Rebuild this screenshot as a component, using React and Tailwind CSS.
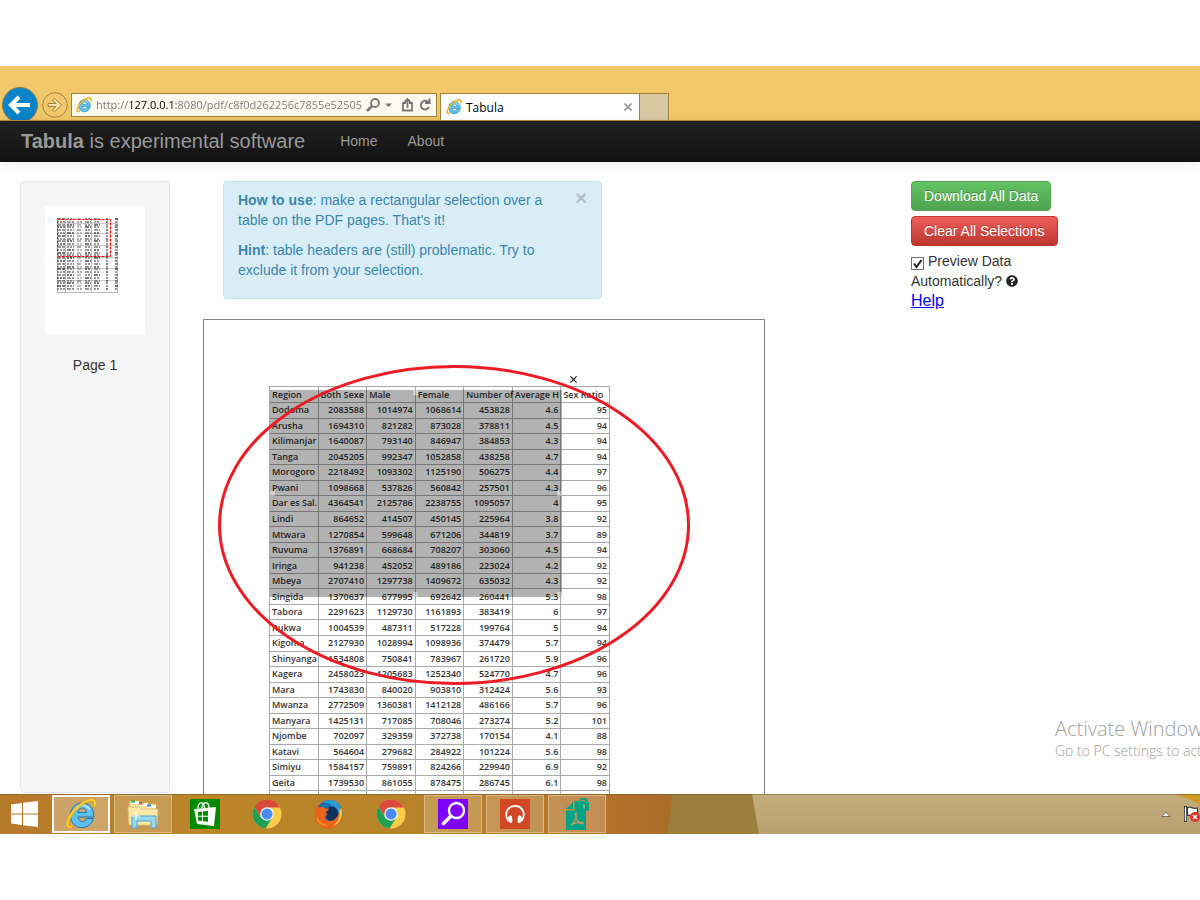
import { FaQuestionCircle } from 'react-icons/fa';

const columns = ['Region', 'Both Sexe', 'Male', 'Female', 'Number of', 'Average H', 'Sex Ratio'];

const rows = [
  ['Dodoma', '2083588', '1014974', '1068614', '453828', '4.6', '95'],
  ['Arusha', '1694310', '821282', '873028', '378811', '4.5', '94'],
  ['Kilimanjar', '1640087', '793140', '846947', '384853', '4.3', '94'],
  ['Tanga', '2045205', '992347', '1052858', '438258', '4.7', '94'],
  ['Morogoro', '2218492', '1093302', '1125190', '506275', '4.4', '97'],
  ['Pwani', '1098668', '537826', '560842', '257501', '4.3', '96'],
  ['Dar es Sal.', '4364541', '2125786', '2238755', '1095057', '4', '95'],
  ['Lindi', '864652', '414507', '450145', '225964', '3.8', '92'],
  ['Mtwara', '1270854', '599648', '671206', '344819', '3.7', '89'],
  ['Ruvuma', '1376891', '668684', '708207', '303060', '4.5', '94'],
  ['Iringa', '941238', '452052', '489186', '223024', '4.2', '92'],
  ['Mbeya', '2707410', '1297738', '1409672', '635032', '4.3', '92'],
  ['Singida', '1370637', '677995', '692642', '260441', '5.3', '98'],
  ['Tabora', '2291623', '1129730', '1161893', '383419', '6', '97'],
  ['Rukwa', '1004539', '487311', '517228', '199764', '5', '94'],
  ['Kigoma', '2127930', '1028994', '1098936', '374479', '5.7', '94'],
  ['Shinyanga', '1534808', '750841', '783967', '261720', '5.9', '96'],
  ['Kagera', '2458023', '1205683', '1252340', '524770', '4.7', '96'],
  ['Mara', '1743830', '840020', '903810', '312424', '5.6', '93'],
  ['Mwanza', '2772509', '1360381', '1412128', '486166', '5.7', '96'],
  ['Manyara', '1425131', '717085', '708046', '273274', '5.2', '101'],
  ['Njombe', '702097', '329359', '372738', '170154', '4.1', '88'],
  ['Katavi', '564604', '279682', '284922', '101224', '5.6', '98'],
  ['Simiyu', '1584157', '759891', '824266', '229940', '6.9', '92'],
  ['Geita', '1739530', '861055', '878475', '286745', '6.1', '98'],
  ['Tanzania', '43625354', '21239313', '22386041', '9109150', '4.8', '95'],
];

function IeIcon({ className }) {
  return (
    <svg viewBox="0 0 32 32" className={className} aria-hidden="true">
      <path
        d="M28.500 20.500C26.800 26 22.500 29.500 17 29.500 10 29.500 5.500 24.500 5.500 17.300 5.500 10.500 10.300 5 17 5c7.500 0 12 5.500 11.800 14H13c.4 2.800 2.100 4.700 4.600 4.700 1.700 0 2.900-1 3.700-3.200zM13 14.500h8.500c-.3-2.900-1.900-4.400-4.200-4.400s-3.900 1.500-4.300 4.400z"
        fill="#5cc0f0"
        stroke="#1d78b8"
        strokeWidth="1"
      />
      <path d="M9 14c1-4 4-6.500 8-6.500 3.500 0 6.500 1.500 8 4.500" fill="none" stroke="#b4e7fb" strokeWidth="2" />
      <path
        d="M6.500 28.500C2 30.500 1 26 4.500 19.500 9 11 18 3.500 25.500 2c4-.8 5.500 1.700 4 5.500"
        fill="none"
        stroke="#d99a10"
        strokeWidth="3"
        strokeLinecap="round"
      />
      <path
        d="M6.500 28.500C2 30.500 1 26 4.500 19.500 9 11 18 3.500 25.500 2c4-.8 5.500 1.700 4 5.500"
        fill="none"
        stroke="#fbd02f"
        strokeWidth="2"
        strokeLinecap="round"
      />
    </svg>
  );
}

function ChromeIcon() {
  return (
    <svg viewBox="0 0 30 30" className="size-[30px]" aria-hidden="true">
      <circle cx="15" cy="15" r="14.500" fill="#fccd48" />
      <path d="M2.400 7.700A14.500 14.500 0 0 0 13.500 29.400L20.500 18.500 9 18z" fill="#1fa055" />
      <path d="M2.400 7.700A14.500 14.500 0 0 1 28 8.500H15l-6.300 8.500z" fill="#dc4a3d" />
      <circle cx="15" cy="15" r="6.800" fill="#f4f4f4" />
      <circle cx="15" cy="15" r="5.500" fill="#4a8af4" />
    </svg>
  );
}

function FirefoxIcon() {
  return (
    <svg viewBox="0 0 30 30" className="size-[30px]" aria-hidden="true">
      <circle cx="15.500" cy="14" r="13" fill="#1b6fb0" />
      <path d="M9 4c4-4 12-4 16 1 2 3 3 7 2 11l-6-5-6-7z" fill="#2c9bd6" />
      <path d="M14 9c4-3 9-1 10 4s-2 9-7 9-7-6-3-13z" fill="#10305e" />
      <path
        d="M27.500 9c3 9-2 20-12.500 20.500C6 29.500.5 23 .6 15.500.7 11 2 8 4 5.500c0 1.500.4 2.500 1 3C7 7.300 9.500 8 11 9.500l4 .2c-.3 1.500-1.500 2.400-3 2.800-.3 1.300.4 2.300 1.800 2.700-2.600 1.400-3.600 3-2.300 4.800 2 2.700 6 2.500 8.500.8 3.500-2.300 5.700-6 5.300-11z"
        fill="#e8641b"
      />
      <path d="M27.500 9c2 8-1.500 16-9 18.500 5-4 7.500-8 7-16z" fill="#fbc63c" />
      <path d="M3 16c1 6 6 10 12 10-4 2-10 0-12-5z" fill="#f58b28" />
    </svg>
  );
}

function FolderIcon() {
  return (
    <svg viewBox="0 0 32 30" className="h-[30px] w-8" aria-hidden="true">
      <path d="M2 4V2h9l1 2h7l1 1h9v20H2z" fill="#f1dc90" stroke="#cda94c" strokeWidth=".8" />
      <path d="M4 2h8v3H4zM12 4h9v3h-9zM20 6h9v3h-9z" fill="#fff" />
      <path d="M4 1.500h4v2H4z" fill="#22b14c" />
      <path d="M12 3.500h3.500v2H12z" fill="#d9432f" />
      <path d="M20 5.500h4v2h-4z" fill="#2b7fd4" />
      <path d="M1 8h11l2 2h17l-1 16H2z" fill="#f8e8a6" stroke="#dcc273" strokeWidth=".8" />
      <path d="M5 17h24v12h-5v-7H10v7H5z" fill="#9bd6ef" stroke="#4ea5cf" />
      <path d="M9 13v8M5 17h8" stroke="#fff" strokeWidth="1" />
    </svg>
  );
}

function StoreIcon() {
  return (
    <svg viewBox="0 0 30 30" className="size-[30px]" aria-hidden="true">
      <path d="M0 0h30v30H0z" fill="#008a00" />
      <path d="M8 9.500C8 2 14 2 14.500 9M12 9c0-7 7-7 7 0" fill="none" stroke="#fff" strokeWidth="1.300" />
      <path d="M4 10l22-2-2 19-17-2z" fill="#fff" />
      <path d="m8 13 4-.5v4.300H8zm5-.6 5-.6v5h-5zM8 17.800h4V22l-4-.5zm5 0h5v5l-5-.6z" fill="#008a00" />
    </svg>
  );
}

function SearchAppIcon() {
  return (
    <svg viewBox="0 0 30 30" className="size-[30px]" aria-hidden="true">
      <path d="M0 0h30v30H0z" fill="#8000ff" />
      <circle cx="18.500" cy="11.500" r="7.500" fill="none" stroke="#fff" strokeWidth="2.400" />
      <path d="m12.500 17.500-7 7" stroke="#fff" strokeWidth="3.600" strokeLinecap="round" />
    </svg>
  );
}

function HeadphonesIcon() {
  return (
    <svg viewBox="0 0 30 30" className="size-[30px]" aria-hidden="true">
      <path d="M0 0h30v30H0z" fill="#d24726" />
      <path d="M8.500 22C3.500 15 7.500 7 15 7s11.500 8 6.500 15" fill="none" stroke="#fff" strokeWidth="1.800" />
      <path
        d="M10 16.500c2-.5 2 .5 2.300 4 .2 2.500 0 3.500-1.300 3.500-2 0-3-2-3-4s.6-3 2-3.500zM20 16.500c-2-.5-2 .5-2.300 4-.2 2.500 0 3.500 1.300 3.500 2 0 3-2 3-4s-.6-3-2-3.500z"
        fill="#fff"
      />
    </svg>
  );
}

function PdfLockIcon() {
  return (
    <svg viewBox="0 0 26 32" className="h-8 w-[26px]" aria-hidden="true">
      <path d="M2 11 9 4v7zM10.500 3H22v29H2V12.500h8.500z" fill="#00a384" />
      <path d="M15 4h10v8.500H15z" fill="#00a384" />
      <path d="M16 4C16-.5 23-.5 23 4" fill="none" stroke="#00a384" strokeWidth="1.700" />
      <path d="M20 6.500v4" stroke="#d8b27c" strokeWidth="1.500" />
      <path
        d="M7 27c2-1 6-7 5.500-12-2-1-1 5 1 8s5.500 3.500 5.500 2-8-1-12 2z"
        fill="none"
        stroke="#b99b63"
        strokeWidth="1.400"
      />
    </svg>
  );
}

const taskbarApps = [
  { name: 'Internet Explorer', icon: <IeIcon className="size-8" />, style: 'border-2 border-white/90 bg-white/30' },
  { name: 'File Explorer', icon: <FolderIcon />, style: 'border border-[#d9b888] bg-white/20' },
  { name: 'Store', icon: <StoreIcon />, style: '' },
  { name: 'Google Chrome', icon: <ChromeIcon />, style: '' },
  { name: 'Firefox', icon: <FirefoxIcon />, style: '' },
  { name: 'Chrome Profile', icon: <ChromeIcon />, style: '' },
  { name: 'Search', icon: <SearchAppIcon />, style: 'border border-[#d9b888] bg-white/20' },
  { name: 'Music', icon: <HeadphonesIcon />, style: 'border border-[#d9b888] bg-white/20' },
  { name: 'PDF Unlocker', icon: <PdfLockIcon />, style: 'border border-[#d9b888] bg-white/20' },
];

function BrowserBar() {
  return (
    <div className="h-[55px] shrink-0 overflow-hidden border-b border-[#b98f3c] bg-[#f0c869] pt-5 font-['Open_Sans',sans-serif] text-black">
      <div className="flex h-[38px] items-center pl-0.5">
        <button aria-label="Back" className="size-9 shrink-0">
          <svg viewBox="0 0 36 36" className="size-9">
            <circle cx="18" cy="18" r="17.500" fill="#0a83c8" stroke="#8c7a4c" />
            <path d="M28 18H10M17 10l-8 8 8 8" fill="none" stroke="#fff" strokeWidth="4" />
          </svg>
        </button>
        <button aria-label="Forward" className="ml-1 size-[26px] shrink-0">
          <svg viewBox="0 0 26 26" className="size-[26px]">
            <circle cx="13" cy="13" r="12.300" fill="none" stroke="#a3823f" />
            <path
              d="M6 11.500h8L10.500 8l2-1.500L19.500 13l-7 6.500-2-1.500 3.500-3.500H6z"
              fill="#f8e3ac"
              stroke="#a3823f"
            />
          </svg>
        </button>
        <div className="ml-[3px] flex h-6 w-[366px] shrink-0 items-center border border-[#a3823f] bg-[#fffaee] px-1">
          <IeIcon className="size-4 shrink-0" />
          {/* the host part of the address is darker than the rest */}
          <input
            aria-label="Address"
            readOnly
            value="http://127.0.0.1:8080/pdf/c8f0d262256c7855e52505"
            className="ml-1 min-w-0 flex-1 bg-[linear-gradient(to_right,#777_35px,#000_35px,#000_80px,#777_80px)] bg-clip-text text-[11px] text-transparent outline-none"
          />
          <svg viewBox="0 0 66 16" className="ml-0.5 h-4 w-[66px] shrink-0" fill="none" stroke="#777">
            <circle cx="9" cy="6" r="4" strokeWidth="1.800" />
            <path d="m6 9-5 5" strokeWidth="2.600" />
            <path d="M19 6.500h7L22.500 10z" fill="#777" stroke="none" />
            <path d="M40 6h-3v7.500h9V6h-3M41.500 11V2.500M38.500 5l3-3 3 3" strokeWidth="1.800" />
            <path d="M62.500 5.500A4.300 4.300 0 1 0 63 10M63.500 1.500V6H59" strokeWidth="2" />
          </svg>
        </div>
        <div className="mt-[7px] ml-[3px] flex self-start">
          <div className="flex h-[31px] w-[200px] items-start border border-[#a3823f] bg-white pt-[5px] pr-[3px] pl-[5px]">
            <IeIcon className="size-4" />
            <span className="ml-1 flex-1 pt-px text-[12px] leading-4">Tabula</span>
            <button aria-label="Close tab" className="flex size-4 items-center justify-center">
              <svg viewBox="0 0 8 8" className="size-2">
                <path d="m.5.5 7 7m0-7-7 7" stroke="#9a9a9a" strokeWidth="1.800" />
              </svg>
            </button>
          </div>
          <button aria-label="New tab" className="h-[31px] w-[29px] border border-l-0 border-[#a3823f] bg-[#d8c8a2]" />
        </div>
      </div>
    </div>
  );
}

function Thumbnail() {
  const cols = [[12, 8], [22, 7], [32, 5], [40, 6], [49, 6], [61, 2], [70, 3]];
  return (
    <svg viewBox="0 0 100 129" className="mx-auto h-[129px] w-[100px] bg-white" aria-label="Page 1 preview">
      {[18, 28, 40, 52, 63, 75].map((y) => (
        <path key={y} d={`M12 ${y - 0.5}h61`} stroke="#c8c8c8" />
      ))}
      <path d="M12.500 12v75M20.500 12v75M46.500 12v75M72.500 12v75M12 86.500h61" stroke="#bbb" />
      {rows.map((row, i) =>
        cols.map(([x, w], j) => (
          <path
            key={`${i}-${j}`}
            d={`M${x} ${13 + Math.round(i * 2.8)}h${w}`}
            stroke={(i + j) % 3 ? '#555' : '#222'}
            strokeWidth="1.600"
            strokeDasharray={(i + j) % 2 ? '2 1' : '4 1'}
            opacity={j === 2 ? 0.5 : 0.8}
          />
        ))
      )}
      <path d="M12.500 13.500h53v37h-53z" fill="none" stroke="#fff" />
      <path d="M12.500 13.500h53v37h-53z" fill="none" stroke="#f00" strokeDasharray="3 1" />
    </svg>
  );
}

function PdfPage() {
  return (
    <div className="relative h-[727px] w-[562px] border border-[#888] bg-white pt-[66px] pl-[65px]">
      <table className="h-[421px] w-[341px] table-fixed border-collapse font-['Open_Sans',sans-serif] text-[9px] leading-3 font-semibold text-[#333]">
        <thead>
          <tr className="h-4">
            {columns.map((c) => (
              <th
                key={c}
                className="border border-[#a9a9a9] p-0 pt-px pl-0.5 text-left font-semibold whitespace-nowrap"
              >
                {c}
              </th>
            ))}
          </tr>
        </thead>
        <tbody>
          {rows.map((row) => (
            <tr key={row[0]}>
              {row.map((cell, i) => (
                <td
                  key={i}
                  className={`border border-[#a9a9a9] p-0 whitespace-nowrap ${i === 0 ? 'pl-0.5' : 'pr-0.5 text-right'}`}
                >
                  {cell}
                </td>
              ))}
            </tr>
          ))}
        </tbody>
      </table>

      {/* selection */}
      <div className="absolute top-[70px] left-[66px] h-[207px] w-[292px] bg-black/30">
        <span className="absolute top-0 left-[143px] size-[5px] bg-white/40" />
        <span className="absolute top-[101px] left-0 size-[5px] bg-white/40" />
        <span className="absolute top-[101px] right-0 size-[5px] bg-white/40" />
        <span className="absolute bottom-0 left-[143px] size-[5px] bg-white/40" />
        <span className="absolute right-0 bottom-0 size-[5px] bg-white/40" />
      </div>
      <button aria-label="Remove selection" className="absolute top-14 left-[366px] size-[7px]">
        <svg viewBox="0 0 8 8" className="size-[7px]">
          <path d="m.5.5 7 7m0-7-7 7" stroke="#000" strokeWidth="1.200" />
        </svg>
      </button>

      {/* red marker */}
      <svg
        viewBox="0 0 472 320"
        className="pointer-events-none absolute top-[45px] left-[14px] h-[320px] w-[472px]"
      >
        <ellipse cx="236" cy="160" rx="234.500" ry="158.500" fill="none" stroke="#ed1c24" strokeWidth="3" />
      </svg>
    </div>
  );
}

function Taskbar() {
  return (
    <div className="relative h-10 shrink-0 overflow-hidden bg-[#c0a777]">
      <svg viewBox="0 0 1200 40" preserveAspectRatio="none" className="absolute inset-0 size-full" aria-hidden="true">
        <defs>
          <linearGradient id="wood">
            <stop offset="0" stopColor="#b5792a" />
            <stop offset=".3" stopColor="#bb8528" />
            <stop offset=".65" stopColor="#b8822a" />
            <stop offset=".92" stopColor="#b37029" />
            <stop offset="1" stopColor="#a96c2a" />
          </linearGradient>
          <linearGradient id="sand" x2="0" y2="1">
            <stop offset="0" stopColor="#c4ad7c" />
            <stop offset="1" stopColor="#b9a072" />
          </linearGradient>
        </defs>
        <path d="M0 0h1200v40H0z" fill="url(#sand)" />
        <path d="M0 0h752l7 40H0z" fill="#9d7e3c" />
        <path d="M0 0h673l-6 40H0z" fill="url(#wood)" />
        <path d="M1174 0h26v11q-10-7-26-11z" fill="#cf9a25" />
        <path d="M0 .5h1200" stroke="#6b5630" opacity=".5" />
      </svg>
      <div className="relative flex h-full items-center gap-1">
        <button aria-label="Start" className="flex w-12 shrink-0 justify-center">
          <svg viewBox="0 0 27 26" className="h-[26px] w-[27px]">
            <path
              d="M0 3.500 11 2v10.500H0zM12 1.800 27 0v12.500H12zM0 13.500h11V24L0 22.500zM12 13.500h15V26l-15-1.800z"
              fill="#fff"
            />
          </svg>
        </button>
        {taskbarApps.map((app) => (
          <button
            key={app.name}
            aria-label={app.name}
            className={`flex h-[38px] w-[58px] shrink-0 items-center justify-center ${app.style}`}
          >
            {app.icon}
          </button>
        ))}
        <div className="ml-auto flex items-center gap-3">
          <button aria-label="Show hidden icons">
            <svg viewBox="0 0 10 6" className="h-1.5 w-2.5">
              <path d="M1 5.500 5 1l4 4.500z" fill="#fff" stroke="#555" strokeWidth=".8" />
            </svg>
          </button>
          <button aria-label="Action Center" className="w-[17px]">
            <svg viewBox="0 0 18 18" className="size-[18px] max-w-none">
              <path d="M2.500 1v16" stroke="#3d3d3d" strokeWidth="3" />
              <path
                d="M4.500 2.500c4-1.500 4 2 10 .5v8c-5 1.500-6-2-10-.5z"
                fill="#fff"
                stroke="#3d3d3d"
                strokeWidth="1.200"
              />
              <path d="M2.500 2v14" stroke="#fff" strokeWidth="1.200" />
              <circle cx="12" cy="12" r="5" fill="#e03127" />
              <path d="m10 10 4 4m0-4-4 4" stroke="#fff" strokeWidth="1.600" />
            </svg>
          </button>
        </div>
      </div>
    </div>
  );
}

export default function App() {
  return (
    <div className="h-screen overflow-hidden bg-white py-[66px] font-['Liberation_Sans',Arial,sans-serif] text-sm leading-5 text-[#333]">
      <div className="flex h-full flex-col">
        <BrowserBar />

        {/* NAVBAR */}
        <nav className="z-10 flex h-[41px] shrink-0 items-center bg-linear-to-b from-[#222] to-[#111] pb-0.5 pl-[21px] text-[#999] shadow-[0_1px_10px_rgba(0,0,0,0.1)]">
          <a href="#top" className="text-xl">
            <strong>Tabula</strong> is experimental software
          </a>
          <a href="#home" className="ml-[35px]">Home</a>
          <a href="#about" className="ml-[30px]">About</a>
        </nav>

        {/* CONTENT */}
        <main className="relative flex min-h-0 flex-1 overflow-hidden px-5 pt-[19px]">
          <aside className="mb-px w-[150px] shrink-0 overflow-hidden rounded border border-[#e3e3e3] bg-[#f5f5f5] pt-6 text-center">
            <Thumbnail />
            <p className="mt-5">Page 1</p>
          </aside>

          <div className="ml-[33px] min-w-0 flex-1">
            <div className="mb-5 ml-5 flex w-[379px] items-start rounded border border-[#bce8f1] bg-[#d9edf7] px-3.5 py-2 text-[#3a87ad]">
              <div className="flex-1 pr-5">
                <p className="mb-2.5">
                  <strong>How to use</strong>: make a rectangular selection over a table on the PDF pages. That's it!
                </p>
                <p className="mb-2.5">
                  <strong>Hint</strong>: table headers are (still) problematic. Try to exclude it from your selection.
                </p>
              </div>
              <button className="text-xl leading-4 font-bold text-[#adbec6]" aria-label="Close">×</button>
            </div>
            <PdfPage />
          </div>

          <div className="w-[269px] shrink-0">
            <div className="flex flex-col items-start gap-[5px] text-white">
              <button className="h-[30px] rounded border border-[#51a351] bg-linear-to-b from-[#62c462] to-[#51a351] px-3 [text-shadow:0_-1px_0_rgba(0,0,0,0.25)]">
                Download All Data
              </button>
              <button className="h-[30px] rounded border border-[#bd362f] bg-linear-to-b from-[#ee5f5b] to-[#bd362f] px-3 [text-shadow:0_-1px_0_rgba(0,0,0,0.25)]">
                Clear All Selections
              </button>
            </div>
            <label className="mt-[5px] block w-[140px]">
              <span className="relative mr-1 inline-block size-[13px] align-[-4px]">
                <input
                  type="checkbox"
                  defaultChecked
                  className="peer block size-[13px] appearance-none border border-[#707070] bg-white"
                />
                <svg
                  viewBox="0 0 13 13"
                  className="pointer-events-none absolute inset-0 hidden size-[13px] peer-checked:block"
                >
                  <path d="m3 6.500 2.500 3.500L10.500 3" fill="none" stroke="#222" strokeWidth="2" />
                </svg>
              </span>
              Preview Data Automatically?{' '}
              <FaQuestionCircle className="inline size-3 align-[-1px] text-[#222]" />
            </label>
            <a href="#help" className="text-base leading-5 text-[#0000ff] underline">Help</a>
          </div>

          {/* activation watermark */}
          <div className="absolute right-0 bottom-[33px] w-[145px] overflow-hidden font-['Open_Sans',sans-serif] font-light whitespace-nowrap text-[#a0a0a0]">
            <p className="text-xl leading-6">Activate Windows</p>
            <p className="text-sm leading-5">Go to PC settings to activate Windows.</p>
          </div>
        </main>

        <Taskbar />
      </div>
    </div>
  );
}
